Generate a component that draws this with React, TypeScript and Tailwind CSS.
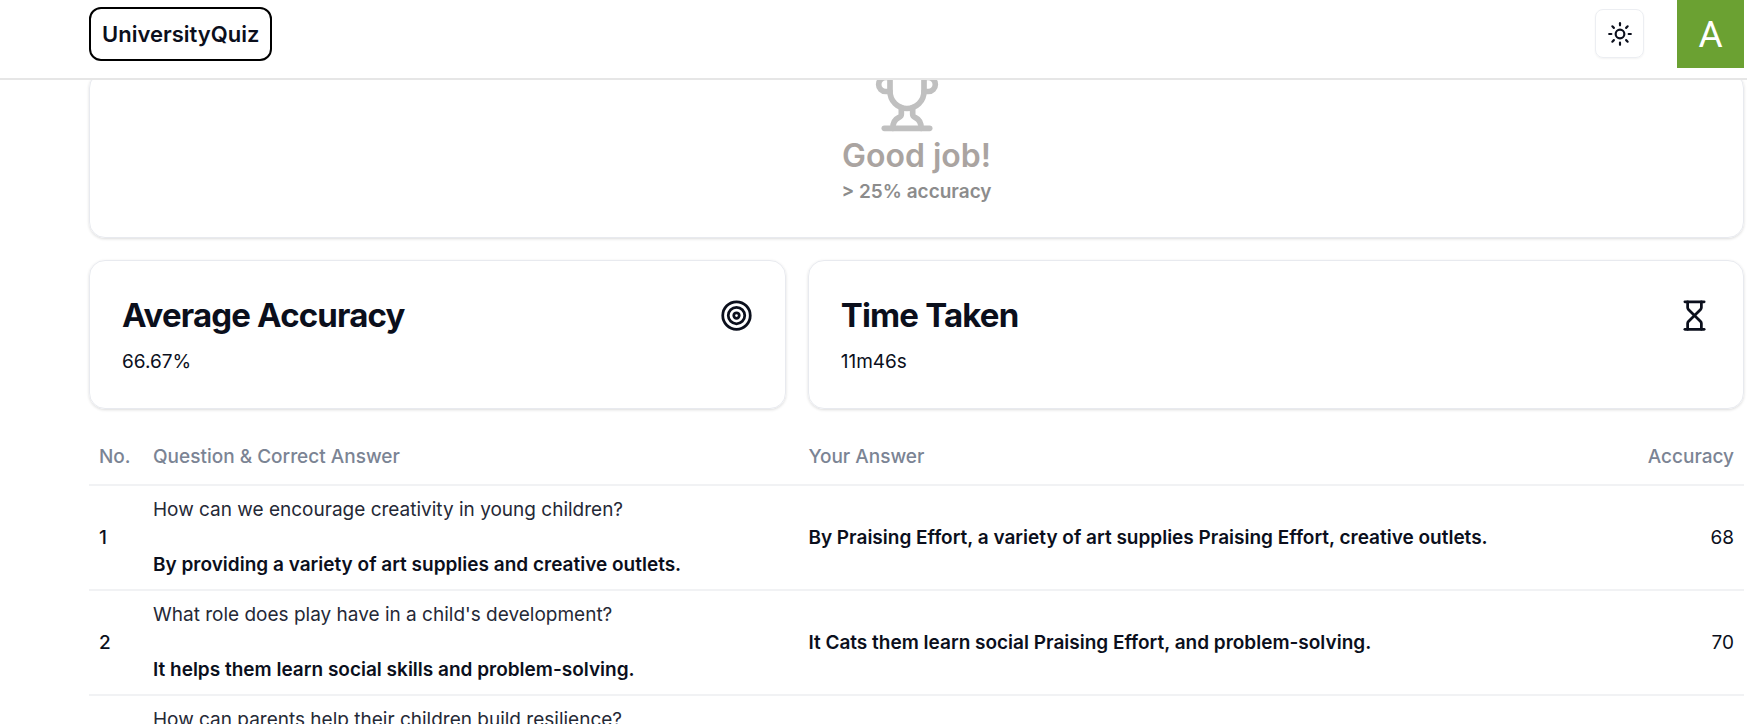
import React from "react";
import { Hourglass, Sun, Target } from "lucide-react";

type Row = { question: string; answer: string; yours: string; accuracy: string };

const rows: Row[] = [
  {
    question: "How can we encourage creativity in young children?",
    answer: "By providing a variety of art supplies and creative outlets.",
    yours: "By Praising Effort, a variety of art supplies Praising Effort, creative outlets.",
    accuracy: "68",
  },
  {
    question: "What role does play have in a child's development?",
    answer: "It helps them learn social skills and problem-solving.",
    yours: "It Cats them learn social Praising Effort, and problem-solving.",
    accuracy: "70",
  },
  {
    question: "How can parents help their children build resilience?",
    answer: "",
    yours: "",
    accuracy: "",
  },
];

function TrophyIcon() {
  return (
    <svg
      viewBox="0 0 24 24"
      fill="none"
      stroke="currentColor"
      strokeWidth="2"
      strokeLinecap="round"
      strokeLinejoin="round"
      className="mr-5 size-[68px] text-[#c0c0c0]"
      aria-hidden="true"
    >
      <path d="M6 9H4.5a2.5 2.5 0 0 1 0-5H6" />
      <path d="M18 9h1.5a2.5 2.5 0 0 0 0-5H18" />
      <path d="M4 22h16" />
      <path d="M10 14.66V17c0 .55-.47.98-.97 1.21C7.85 18.75 7 20.24 7 22" />
      <path d="M14 14.66V17c0 .55.47.98.97 1.21C16.15 18.75 17 20.24 17 22" />
      <path d="M18 2H6v7a6 6 0 0 0 12 0V2Z" />
    </svg>
  );
}

function StatCard({
  title,
  value,
  icon,
  className,
}: {
  title: string;
  value: string;
  icon: React.ReactNode;
  className: string;
}) {
  return (
    <section
      className={`rounded-2xl border border-[#e8eaef] p-8 shadow-[0_1px_3px_rgba(0,0,0,0.14)] ${className}`}
    >
      <div className="flex items-center justify-between">
        <h2 className="text-[33px] leading-[45px] font-bold tracking-tight">{title}</h2>
        {icon}
      </div>
      <p className="mt-[10px] text-[19px] leading-7">{value}</p>
    </section>
  );
}

export default function App() {
  return (
    <div className="flex h-screen flex-col overflow-hidden bg-white font-['Inter',sans-serif] text-[#0b0f1c]">
      <header className="z-10 flex h-20 shrink-0 items-start justify-between border-b-2 border-[#e6e6e6] bg-white pr-[3px] pl-[89px]">
        <a
          href="#"
          className="mt-[7px] flex h-[54px] items-center rounded-xl border-2 border-black px-[11px] text-[22px] leading-8 font-semibold"
        >
          UniversityQuiz
        </a>
        <div className="flex items-start gap-[33px]">
          <button
            type="button"
            aria-label="Toggle theme"
            className="mt-[9px] flex size-[49px] items-center justify-center rounded-lg border border-[#eceef2] shadow-xs"
          >
            <Sun size={26} />
          </button>
          <button
            type="button"
            aria-label="Account"
            className="flex h-[68px] w-[67px] items-center justify-center bg-[#6ba132] font-['Roboto',sans-serif] text-[37px] leading-none text-white"
          >
            A
          </button>
        </div>
      </header>

      <main className="flex-1 pr-[3px] pl-[89px]">
        <section className="-mt-2 flex flex-col items-center rounded-2xl border border-[#e8eaef] pb-[31px] shadow-[0_1px_3px_rgba(0,0,0,0.14)]">
          <div className="-mt-[7px] flex flex-col items-center">
            <TrophyIcon />
            <p className="text-[32px] leading-[44px] font-semibold text-[#aaa4a1]">Good job!</p>
            <p className="text-[19px] leading-7 font-semibold text-[#8c8c8c]">&gt; 25% accuracy</p>
          </div>
        </section>

        <div className="mt-[22px] grid grid-cols-7 gap-[22px]">
          <StatCard
            title="Average Accuracy"
            value="66.67%"
            icon={<Target size={33} />}
            className="col-span-3"
          />
          <StatCard
            title="Time Taken"
            value="11m46s"
            icon={<Hourglass size={33} />}
            className="col-span-4"
          />
        </div>

        <table className="mt-[21px] w-full table-fixed text-[19px] leading-7">
          <thead>
            <tr className="h-[55px] border-b-2 border-[#f1f2f4] text-left text-[#7b8494]">
              <th className="w-[54px] pl-[10px] font-medium">No.</th>
              <th className="w-[39.6%] px-[10px] font-medium">Question &amp; Correct Answer</th>
              <th className="px-[10px] font-medium">Your Answer</th>
              <th className="w-32 px-[10px] text-right font-medium">Accuracy</th>
            </tr>
          </thead>
          <tbody>
            {rows.map((row, i) => (
              <tr key={row.question} className="border-b-2 border-[#f1f2f4]">
                <td className="px-[10px] font-medium">{i + 1}</td>
                <td className="p-[10px]">
                  <p className="text-[#252936]">{row.question}</p>
                  <p className="mt-[27px] min-h-7 font-semibold">{row.answer}</p>
                </td>
                <td className="p-[10px] font-semibold">{row.yours}</td>
                <td className="p-[10px] text-right">{row.accuracy}</td>
              </tr>
            ))}
          </tbody>
        </table>
      </main>
    </div>
  );
}
